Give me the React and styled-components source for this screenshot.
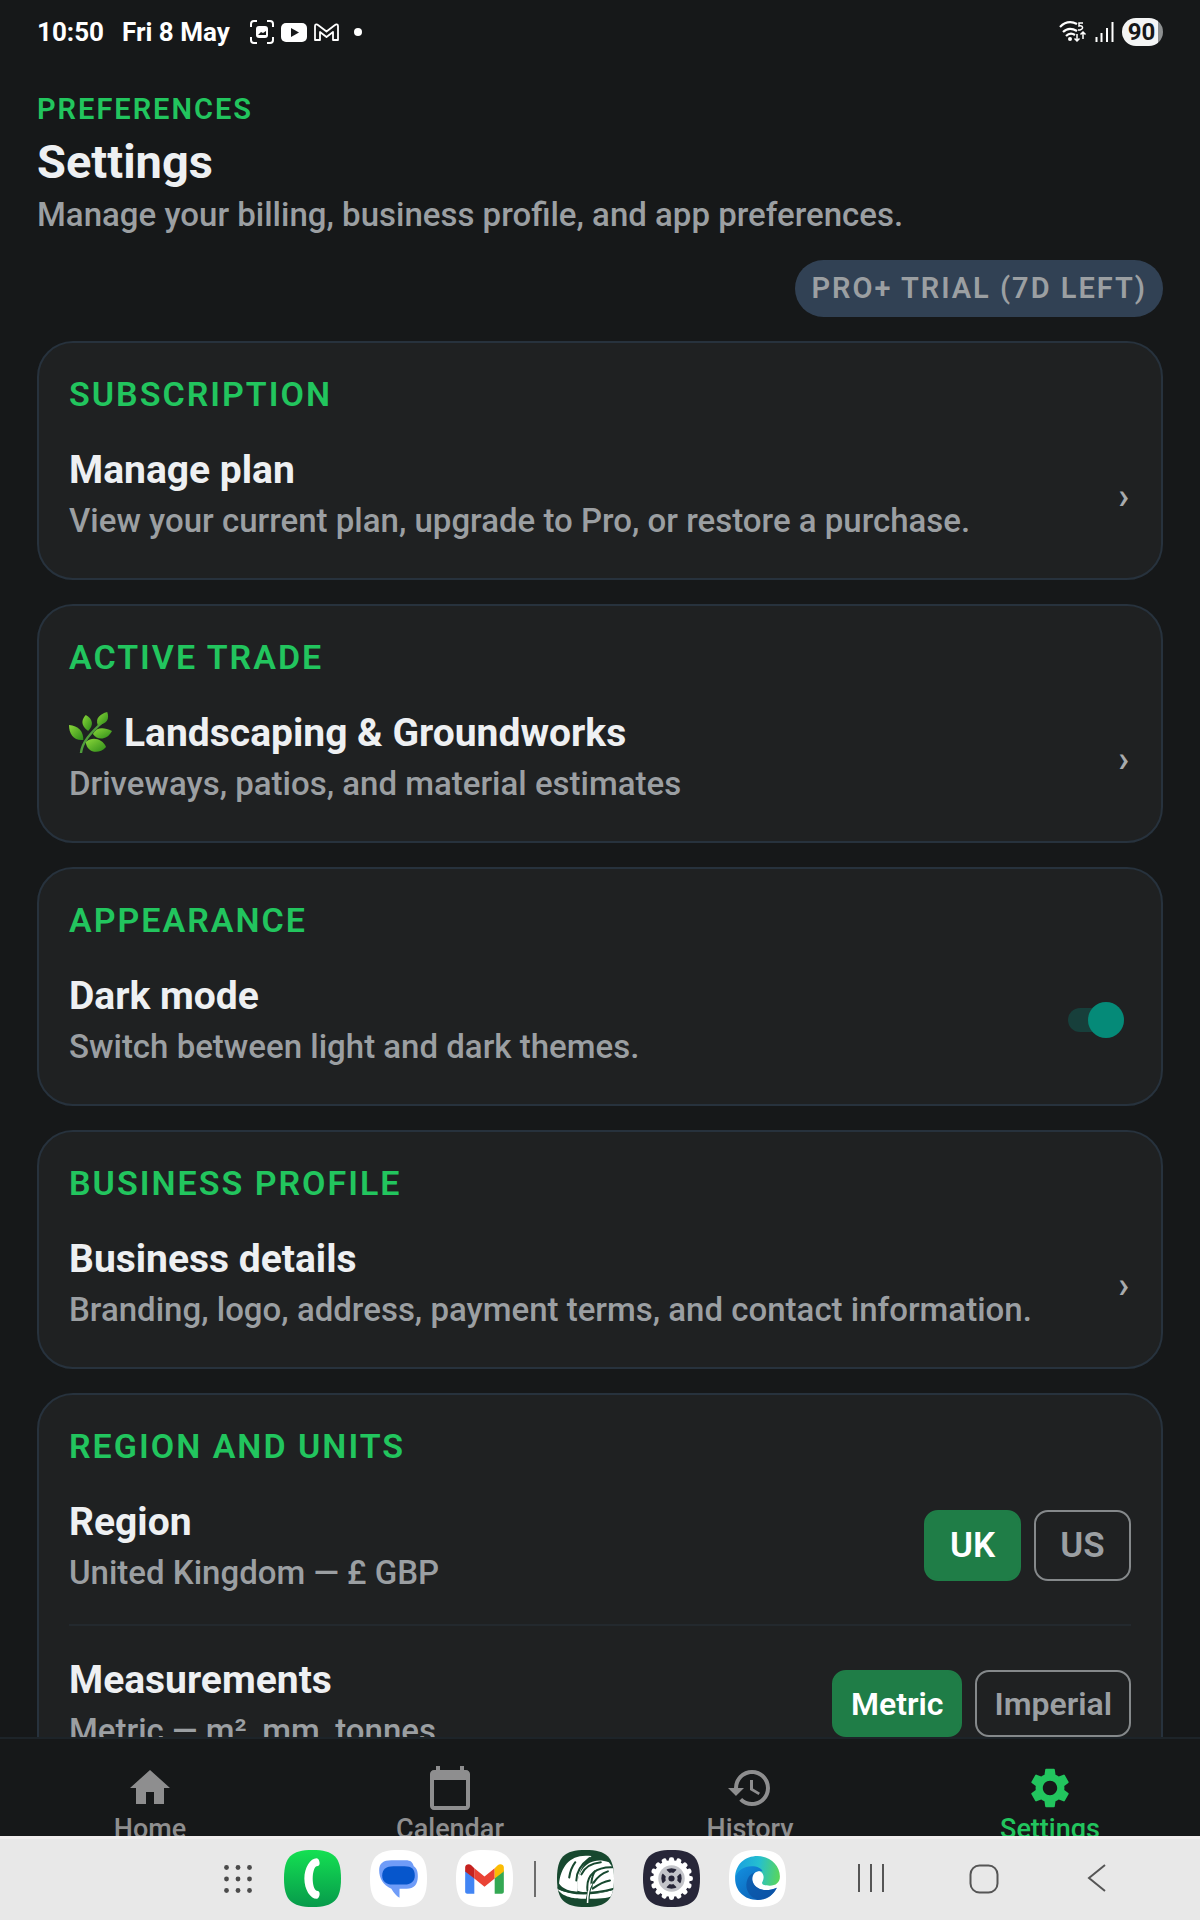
import React, { useState } from 'react'
import styled, { createGlobalStyle } from 'styled-components'
import { MdHome, MdCalendarToday, MdHistory, MdSettings } from 'react-icons/md'

const GlobalStyle = createGlobalStyle`
  * {
    box-sizing: border-box;
  }
  body {
    margin: 0;
    background: #161819;
    font-family: Roboto, "Liberation Sans", sans-serif;
  }
  h1, h2, h3, p {
    margin: 0;
  }
  button {
    font-family: inherit;
    cursor: pointer;
  }
`

const Screen = styled.div`
  height: 100vh;
  display: flex;
  flex-direction: column;
  overflow: hidden;
  background: #161819;
  color: #eef0f2;
`

const StatusBar = styled.header`
  flex: none;
  height: 64px;
  padding: 0 37px;
  display: flex;
  align-items: center;
  justify-content: space-between;
  color: #ffffff;
  font-size: 26px;
  font-weight: 700;
`

const StatusGroup = styled.div`
  display: flex;
  align-items: center;
  gap: ${(props) => props.$gap}px;
`

const StatusIcons = styled(StatusGroup)`
  margin-left: 2px;
`

const Dot = styled.span`
  width: 8px;
  height: 8px;
  margin-left: 8px;
  border-radius: 50%;
  background: #ffffff;
`

const Battery = styled.span`
  width: 41px;
  height: 28px;
  padding-right: 2px;
  border-radius: 14px;
  background: linear-gradient(90deg, #f4f5f5 88%, #8d9091 88%);
  color: #161819;
  font-size: 24px;
  line-height: 28px;
  text-align: center;
`

const Main = styled.main`
  flex: 1;
  min-height: 0;
  overflow: hidden;
  padding: 28px 37px 0;
`

const Eyebrow = styled.p`
  color: #22c55e;
  font-size: 29px;
  line-height: 34px;
  font-weight: 600;
  letter-spacing: 2px;
  text-transform: uppercase;
`

const PageTitle = styled.h1`
  margin-top: 8px;
  font-size: 47px;
  line-height: 56px;
  font-weight: 700;
`

const Muted = styled.p`
  color: #9b9fa2;
  font-size: 33px;
  line-height: 40px;
  font-weight: 500;
`

const Intro = styled(Muted)`
  margin-top: 5px;
`

const PillRow = styled.div`
  display: flex;
  justify-content: flex-end;
  margin: 25px 0 24px;
`

const Pill = styled.span`
  padding: 0 16px;
  border-radius: 29px;
  background: #314154;
  color: #9b9fa2;
  font-size: 29px;
  line-height: 57px;
  font-weight: 600;
  letter-spacing: 2px;
  text-transform: uppercase;
`

const Cards = styled.div`
  display: flex;
  flex-direction: column;
  gap: 24px;
`

const Card = styled.section`
  padding: 30px;
  border: 2px solid #27323d;
  border-radius: 36px;
  background: #1f2122;
`

const CardLabel = styled.h2`
  margin-bottom: 25px;
  color: #22c55e;
  font-size: 34px;
  line-height: 42px;
  font-weight: 600;
  letter-spacing: 2px;
  text-transform: uppercase;
`

const Row = styled.div`
  display: flex;
  align-items: center;
  justify-content: space-between;
  padding: 6px 0 7px;
`

const RowLink = styled(Row).attrs({ as: 'a' })`
  color: inherit;
  text-decoration: none;
`

const RowTitle = styled.h3`
  display: flex;
  align-items: center;
  gap: 12px;
  margin-bottom: 7px;
  font-size: 39px;
  line-height: 48px;
  font-weight: 700;
`

const Chevron = styled.span`
  padding: 5px 2px 0 0;
  color: #a8abad;
  font-size: 36px;
  line-height: 40px;
  font-weight: 600;
`

const Divider = styled.hr`
  height: 2px;
  margin: 24px 0;
  border: 0;
  background: #23292e;
`

const Switch = styled.input`
  appearance: none;
  display: grid;
  align-items: center;
  width: 56px;
  height: 24px;
  margin: 0 7px 0 0;
  background: #173f3b;
  border-radius: 12px;
  cursor: pointer;

  &::before {
    content: '';
    width: 36px;
    height: 36px;
    margin: -6px 0;
    border-radius: 50%;
    background: #058a78;
    justify-self: ${(props) => (props.checked ? 'end' : 'start')};
  }
`

const Choices = styled.div`
  display: flex;
  gap: 13px;
`

const Choice = styled.button`
  height: ${(props) => (props.$compact ? 67 : 71)}px;
  min-width: 97px;
  padding: 0 17px;
  border: 2px solid ${(props) => (props.$active ? '#1f7d47' : '#85898b')};
  border-radius: 14px;
  background: ${(props) => (props.$active ? '#1f7d47' : 'transparent')};
  color: ${(props) => (props.$active ? '#ffffff' : '#9b9fa2')};
  font-size: ${(props) => (props.$compact ? 32 : 35)}px;
  font-weight: 600;
`

const TabBar = styled.nav`
  flex: none;
  height: 99px;
  overflow: hidden;
  display: grid;
  grid-template-columns: repeat(4, 1fr);
  border-top: 2px solid #1d2429;
`

const Tab = styled.a`
  display: flex;
  flex-direction: column;
  align-items: center;
  gap: 2px;
  padding-top: 25px;
  color: ${(props) => (props.$active ? '#22c55e' : '#8e8e8f')};
  font-size: 27px;
  line-height: 30px;
  font-weight: 500;
  text-decoration: none;
`

const Taskbar = styled.footer`
  flex: none;
  height: 84px;
  display: flex;
  align-items: center;
  justify-content: center;
  gap: 29px;
  padding: 0 0 2px 134px;
  border-top: 3px solid #f0eeee;
  background: #e8e8e8;
`

const TaskButton = styled.button`
  display: flex;
  padding: 0;
  border: 0;
  background: none;
`

const AllAppsButton = styled(TaskButton)`
  margin-right: 3px;
`

const TaskDivider = styled.span`
  width: 2px;
  height: 36px;
  margin: 0 -8px;
  background: #6d6d6d;
`

const SystemKeys = styled.div`
  display: flex;
  gap: 84px;
  margin-left: 42px;
`

const squircle = 'M28 0C49 0 56 7 56 28S49 56 28 56 0 49 0 28 7 0 28 0Z'

const Herb = () => (
  <svg width="43" height="42" viewBox="0 0 36 42" preserveAspectRatio="none" aria-hidden="true">
    <defs>
      <linearGradient id="leaf" x1="0" y1="0" x2="1" y2="1">
        <stop offset="0" stopColor="#8bd83a" />
        <stop offset="1" stopColor="#2c8a18" />
      </linearGradient>
    </defs>
    <path d="M10 41C11 30 18 21 29 9" fill="none" stroke="#4f9c3c" strokeWidth="2" />
    <path d="M12 28C4 29 0 22 0 13c8 1 12 6 12 15Z" fill="url(#leaf)" />
    <path d="M16 19C10 14 10 8 14 3c6 4 7 10 2 16Z" fill="url(#leaf)" />
    <path d="M24 13C22 6 26 2 32 0c2 7 0 12-8 13Z" fill="url(#leaf)" />
    <path d="M20 22c3-7 9-7 16-3-4 9-12 10-16 3Z" fill="url(#leaf)" />
    <path d="M14 30c6-6 14-3 17 5-6 8-16 6-17-5Z" fill="url(#leaf)" />
  </svg>
)

const CaptureIcon = () => (
  <svg width="24" height="24" viewBox="0 0 24 24" aria-hidden="true">
    <path d="M1 7V4a3 3 0 0 1 3-3h3M17 1h3a3 3 0 0 1 3 3v3M23 17v3a3 3 0 0 1-3 3h-3M7 23H4a3 3 0 0 1-3-3v-3" fill="none" stroke="#fff" strokeWidth="2" />
    <rect x="6" y="6" width="12" height="12" rx="3" fill="#fff" />
    <path d="M8 15l3-3 2 1 3-2v4Z" fill="#161819" />
  </svg>
)

const VideoIcon = () => (
  <svg width="26" height="19" viewBox="0 0 26 19" aria-hidden="true">
    <rect width="26" height="19" rx="5" fill="#fff" />
    <path d="M10 5v9l8-4.500Z" fill="#161819" />
  </svg>
)

const MailOutline = () => (
  <svg width="25" height="19" viewBox="0 0 25 19" aria-hidden="true">
    <path d="M1 17V3c0-2 2-2 3-1l8.500 6.500L21 2c1-1 3-1 3 1v14h-5V9l-6.500 5L6 9v8Z" fill="none" stroke="#fff" strokeWidth="1.800" strokeLinejoin="round" />
  </svg>
)

const WifiIcon = () => (
  <svg width="28" height="22" viewBox="0 0 28 22" aria-hidden="true">
    <g fill="none" stroke="#fff" strokeWidth="2.200">
      <path d="M1 6C6 1 12 0 18 3" />
      <path d="M4 11c4-4 9-4 14-1" />
      <path d="M7 15c3-3 6-3 9-1" />
      <path d="M24 2h-4v3c4-1 5 3 1 4h-2" strokeWidth="1.500" />
      <path d="M18 13v7M15.500 17.500 18 20l2.500-2.500M24 18v-7M21.500 13.500 24 11l2.500 2.500" strokeWidth="1.500" />
    </g>
    <circle cx="11" cy="18" r="2" fill="#fff" />
  </svg>
)

const SignalIcon = () => (
  <svg width="19" height="20" viewBox="0 0 19 20" aria-hidden="true">
    <path d="M1.500 20v-5M6.500 20v-9M12 20V6M17.500 20V0" stroke="#fff" strokeWidth="2" />
  </svg>
)

const GridIcon = () => (
  <svg width="28" height="28" viewBox="0 0 28 28" aria-hidden="true">
    {[2.5, 14, 25.5].map((y) => [2.5, 14, 25.5].map((x) => (
      <circle key={`${x}-${y}`} cx={x} cy={y} r="2.400" fill="#4b4b4b" />
    )))}
  </svg>
)

const PhoneIcon = () => (
  <svg width="57" height="57" viewBox="0 0 56 56" aria-hidden="true">
    <defs>
      <linearGradient id="phone" x1="0" y1="0" x2="0" y2="1">
        <stop offset="0" stopColor="#14e052" />
        <stop offset="1" stopColor="#079a4b" />
      </linearGradient>
    </defs>
    <path d={squircle} fill="url(#phone)" />
    <path d="M32 8c2 0 3 3 3 5s-1 3-3 3c-5 2-5 22 0 24 2 0 3 1 3 3s-1 5-3 5c-6 0-12-9-12-20S26 8 32 8Z" fill="#fff" />
  </svg>
)

const MessagesIcon = () => (
  <svg width="57" height="57" viewBox="0 0 56 56" aria-hidden="true">
    <path d={squircle} fill="#fff" />
    <path d="M21 10h14c5 0 7 2 8 6 3 2 4 5 4 10 0 8-4 12-11 12h-7v9c-3-2-6-5-8-9C13 35 9 28 9 20c0-7 4-10 12-10Z" fill="#6f9cf8" />
    <path d="M23 16h11c7 0 10 3 10 9s-4 9-10 9H22c-6 0-10-3-10-9s4-9 11-9Z" fill="#0656cc" />
  </svg>
)

const MailIcon = () => (
  <svg width="57" height="57" viewBox="0 0 56 56" aria-hidden="true">
    <path d={squircle} fill="#fff" />
    <path d="M9 20l9 7v16h-7c-1 0-2-1-2-2Z" fill="#4285f4" />
    <path d="M38 27l9-7v21c0 1-1 2-2 2h-7Z" fill="#34a853" />
    <path d="M18 18l10 8 10-8v10l-10 8-10-8Z" fill="#ea4335" />
    <path d="M9 21v-4c0-3 4-4 6-2l3 3v10Z" fill="#c5221f" />
    <path d="M38 18l3-3c2-2 6-1 6 2v4l-9 7Z" fill="#fbbc04" />
  </svg>
)

const LeafAppIcon = () => (
  <svg width="57" height="57" viewBox="0 0 56 56" aria-hidden="true">
    <clipPath id="leafApp">
      <path d={squircle} />
    </clipPath>
    <g clipPath="url(#leafApp)">
      <rect width="56" height="56" fill="#17482f" />
      <path d="M2 33C4 15 14 3 34 6c-9 8-14 16-14 35C13 41 5 38 2 33Z" fill="#fff" />
      <path d="M20 40C18 22 30 5 51 12l5 7v19c-12 5-26 5-36 2Z" fill="#fff" />
      <path d="M0 38c14 7 32 8 56 1v5c-4 3-12 4-22 4-14 0-27 0-34-10Z" fill="#fff" />
      <g fill="none" stroke="#17482f" strokeWidth="2" strokeLinecap="round">
        <path d="M12 27c1-7 3-11 6-15M19 30c0-9 5-16 13-22" />
        <path d="M24 24c3-7 9-11 19-12M56 17c-17-1-28 7-26 23" />
        <path d="M34 36c-1-6 1-11 3-15M36 32c4-6 8-9 14-11M35 38c7-5 11-7 17-8" />
        <path d="M0 37c14 7 32 7 56 1" />
      </g>
      <path d="M28 56c0-13 3-19 9-26-5 9-5 16-5 26Z" fill="#17482f" />
      <path d="M30 52c0-9 1-14 4-19" fill="none" stroke="#fff" strokeWidth="1.500" />
    </g>
  </svg>
)

const GearAppIcon = () => (
  <svg width="57" height="57" viewBox="0 0 56 56" aria-hidden="true">
    <path d={squircle} fill="#272638" />
    {[...Array(16)].map((_, i) => (
      <rect key={i} x="25.500" y="7" width="5" height="7" rx="2" fill="#fff" transform={`rotate(${i * 22.5} 28 28)`} />
    ))}
    <circle cx="28" cy="28" r="18" fill="#fff" />
    <circle cx="28" cy="28" r="13" fill="#c3c4c9" />
    <circle cx="28" cy="28" r="8" fill="none" stroke="#272638" strokeWidth="4" />
    <path d="M20 20l16 16M36 20L20 36" stroke="#c3c4c9" strokeWidth="5" />
    <circle cx="28" cy="28" r="3" fill="#272638" />
  </svg>
)

const BrowserIcon = () => (
  <svg width="57" height="57" viewBox="0 0 56 56" aria-hidden="true">
    <defs>
      <linearGradient id="edgeTop" x1="0" y1="0.500" x2="1" y2="0.600">
        <stop offset="0" stopColor="#1a9fe0" />
        <stop offset="0.500" stopColor="#25bfd0" />
        <stop offset="1" stopColor="#5ad65a" />
      </linearGradient>
      <linearGradient id="edgeLow" x1="0" y1="0" x2="1" y2="1">
        <stop offset="0" stopColor="#1391e0" />
        <stop offset="1" stopColor="#0a55ad" />
      </linearGradient>
    </defs>
    <path d={squircle} fill="#fff" />
    <path d="M6 28C6 14 16 6 28 6s22 9 22 20c0 6-4 9-10 9-5 0-9-1-7-4 3-7-1-11-8-11S10 23 6 28Z" fill="url(#edgeTop)" />
    <path d="M6 28c2-8 9-12 16-12 6 0 10 2 11 5-6-2-11 3-10 9 2 9 13 12 24 7-4 8-11 12-19 12C15 49 6 40 6 28Z" fill="url(#edgeLow)" />
    <path d="M19 27c-5 9 0 20 10 22 8 0 15-5 18-12-11 5-22 2-24-7-.500-3 0-6 2-8-3 1-5 3-6 5Z" fill="#0c4f9f" opacity=".650" />
  </svg>
)

const RecentsIcon = () => (
  <svg width="28" height="28" viewBox="0 0 28 28" aria-hidden="true">
    <path d="M2 0v28M14 0v28M26 0v28" stroke="#555" strokeWidth="2" />
  </svg>
)

const HomeKeyIcon = () => (
  <svg width="30" height="30" viewBox="0 0 30 30" aria-hidden="true">
    <rect x="1.500" y="1.500" width="27" height="27" rx="9" fill="none" stroke="#555" strokeWidth="2" />
  </svg>
)

const BackIcon = () => (
  <svg width="28" height="28" viewBox="0 0 28 28" aria-hidden="true">
    <path d="M22 1L6 14l16 13" fill="none" stroke="#555" strokeWidth="2" />
  </svg>
)

const tabs = [
  { label: 'Home', Icon: MdHome },
  { label: 'Calendar', Icon: MdCalendarToday },
  { label: 'History', Icon: MdHistory },
  { label: 'Settings', Icon: MdSettings },
]

const apps = [
  { label: 'Phone', Icon: PhoneIcon },
  { label: 'Messages', Icon: MessagesIcon },
  { label: 'Mail', Icon: MailIcon },
]

const recentApps = [
  { label: 'Garden', Icon: LeafAppIcon },
  { label: 'Device settings', Icon: GearAppIcon },
  { label: 'Browser', Icon: BrowserIcon },
]

const systemKeys = [
  { label: 'Recents', Icon: RecentsIcon },
  { label: 'Home screen', Icon: HomeKeyIcon },
  { label: 'Back', Icon: BackIcon },
]

const LinkCard = ({ label, icon, title, text }) => (
  <Card>
    <CardLabel>{label}</CardLabel>
    <RowLink href="#">
      <div>
        <RowTitle>{icon}{title}</RowTitle>
        <Muted>{text}</Muted>
      </div>
      <Chevron>›</Chevron>
    </RowLink>
  </Card>
)

const ChoiceRow = ({ title, text, options, value, onChange, compact }) => (
  <Row>
    <div>
      <RowTitle>{title}</RowTitle>
      <Muted>{text}</Muted>
    </div>
    <Choices>
      {options.map((option) => (
        <Choice
          key={option}
          type="button"
          $compact={compact}
          $active={option === value}
          aria-pressed={option === value}
          onClick={() => onChange(option)}
        >
          {option}
        </Choice>
      ))}
    </Choices>
  </Row>
)

const TaskButtons = ({ items }) => items.map(({ label, Icon }) => (
  <TaskButton key={label} type="button" aria-label={label}>
    <Icon />
  </TaskButton>
))

const App = () => {
  const [dark, setDark] = useState(true)
  const [region, setRegion] = useState('UK')
  const [units, setUnits] = useState('Metric')

  return (
    <>
      <GlobalStyle />
      <Screen>
        <StatusBar>
          <StatusGroup $gap={18}>
            <span>10:50</span>
            <span>Fri 8 May</span>
            <StatusIcons $gap={7}>
              <CaptureIcon />
              <VideoIcon />
              <MailOutline />
              <Dot />
            </StatusIcons>
          </StatusGroup>
          <StatusGroup $gap={8}>
            <WifiIcon />
            <SignalIcon />
            <Battery>90</Battery>
          </StatusGroup>
        </StatusBar>

        <Main>
          <Eyebrow>Preferences</Eyebrow>
          <PageTitle>Settings</PageTitle>
          <Intro>Manage your billing, business profile, and app preferences.</Intro>
          <PillRow>
            <Pill>Pro+ trial (7d left)</Pill>
          </PillRow>

          <Cards>
            <LinkCard
              label="Subscription"
              title="Manage plan"
              text="View your current plan, upgrade to Pro, or restore a purchase."
            />
            <LinkCard
              label="Active trade"
              icon={<Herb />}
              title="Landscaping & Groundworks"
              text="Driveways, patios, and material estimates"
            />
            <Card>
              <CardLabel>Appearance</CardLabel>
              <Row as="label" htmlFor="dark-mode">
                <div>
                  <RowTitle>Dark mode</RowTitle>
                  <Muted>Switch between light and dark themes.</Muted>
                </div>
                <Switch
                  id="dark-mode"
                  type="checkbox"
                  role="switch"
                  checked={dark}
                  onChange={() => setDark(!dark)}
                />
              </Row>
            </Card>
            <LinkCard
              label="Business profile"
              title="Business details"
              text="Branding, logo, address, payment terms, and contact information."
            />
            <Card>
              <CardLabel>Region and units</CardLabel>
              <ChoiceRow
                title="Region"
                text="United Kingdom — £ GBP"
                options={['UK', 'US']}
                value={region}
                onChange={setRegion}
              />
              <Divider />
              <ChoiceRow
                title="Measurements"
                text="Metric — m², mm, tonnes"
                options={['Metric', 'Imperial']}
                value={units}
                onChange={setUnits}
                compact
              />
            </Card>
          </Cards>
        </Main>

        <TabBar>
          {tabs.map(({ label, Icon }) => (
            <Tab key={label} href="#" $active={label === 'Settings'}>
              <Icon size={48} />
              {label}
            </Tab>
          ))}
        </TabBar>

        <Taskbar>
          <AllAppsButton type="button" aria-label="All apps">
            <GridIcon />
          </AllAppsButton>
          <TaskButtons items={apps} />
          <TaskDivider />
          <TaskButtons items={recentApps} />
          <SystemKeys>
            <TaskButtons items={systemKeys} />
          </SystemKeys>
        </Taskbar>
      </Screen>
    </>
  )
}

export default App
